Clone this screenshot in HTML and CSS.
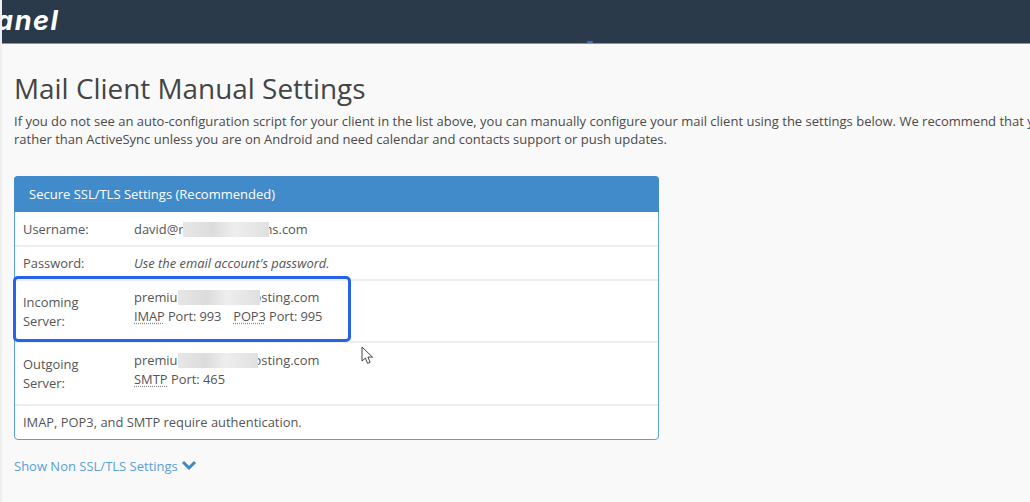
FILE: index.html
```html
<!DOCTYPE html>
<html lang="en">
<head>
<meta charset="utf-8">
<title>Mail Client Manual Settings</title>
<link rel="stylesheet" href="styles.css">
</head>
<body>
<header class="topbar">
  <span class="logo">anel</span>
  <span class="topbar-dot"></span>
</header>
<main class="content">
  <h1 class="title">Mail Client Manual Settings</h1>
  <p class="intro">If you do not see an auto-configuration script for your client in the list above, you can manually configure your mail client using the settings below. We recommend that you use IMAP<br>rather than ActiveSync unless you are on Android and need calendar and contacts support or push updates.</p>
  <section class="panel">
    <div class="panel-head">Secure <abbr class="term">SSL/TLS</abbr> Settings (Recommended)</div>
    <div class="row row-single">
      <div class="label">Username:</div>
      <div class="value">david@r<span class="blur blur-user"></span>ns.com</div>
    </div>
    <div class="row row-single">
      <div class="label">Password:</div>
      <div class="value"><em>Use the email account's password.</em></div>
    </div>
    <div class="row row-double">
      <div class="label label-low">Incoming<br>Server:</div>
      <div class="value value-high">premiu<span class="blur blur-in"></span>osting.com<br><span class="port-line"><abbr class="term">IMAP</abbr> Port: 993<span class="port-gap"></span><abbr class="term">POP3</abbr> Port: 995</span></div>
    </div>
    <div class="row row-double row-outgoing">
      <div class="label label-low">Outgoing<br>Server:</div>
      <div class="value value-high">premiu<span class="blur blur-out"></span>osting.com<br><abbr class="term">SMTP</abbr> Port: 465</div>
    </div>
    <div class="row row-last">IMAP, POP3, and SMTP require authentication.</div>
    <div class="highlight"></div>
    <svg class="cursor" width="13" height="19" viewBox="0 0 13 19"><path d="M1 1v14l3.4-3 2.2 5.4 2.6-1.1-2.3-5.2h4.6z" fill="#fff" stroke="#444" stroke-width="1"/></svg>
  </section>
  <a class="toggle" href="#">Show Non SSL/TLS Settings <svg class="chevron" width="16" height="11" viewBox="0 0 16 11"><path d="M2 2l6 6 6-6" fill="none" stroke="#3f86c4" stroke-width="3"/></svg></a>
</main>
</body>
</html>
```
FILE: styles.css
```css
* { box-sizing: border-box; }
html, body { margin: 0; height: 100%; overflow: hidden; }
body {
  background: #f9f9f9;
  color: #555;
  font-family: "Open Sans", sans-serif;
  font-size: 13px;
  border-left: 2px solid #efefef;
  width: 1030px;
  position: relative;
}
.topbar {
  height: 44px;
  margin-left: -2px;
  background: #2a3a4b;
  border-bottom: 1px solid #8d96a0;
  position: relative;
  overflow: hidden;
}
.logo {
  display: block;
  margin-left: -4px;
  color: #fff;
  font-family: Inter, "Open Sans", sans-serif;
  font-size: 27px;
  font-weight: 700;
  font-style: italic;
  line-height: 41px;
  letter-spacing: 1.6px;
}
.topbar-dot {
  position: absolute;
  left: 587px;
  bottom: -1px;
  width: 6px;
  height: 3px;
  background: #3f6fc4;
  border-radius: 0 0 3px 3px;
}
.content { padding: 28px 0 0 12px; }
.title {
  margin: 0;
  font-size: 27.9px;
  font-weight: 400;
  line-height: 32px;
  color: #444;
}
.intro {
  margin: 8px 0 0;
  width: 1100px;
  line-height: 18px;
  color: #4a4a4a;
}
.panel {
  position: relative;
  margin-top: 28px;
  width: 645px;
  height: 264px;
  background: #fff;
  border: 1px solid #5b9fd8;
  border-radius: 4px;
  font-size: 12.9px;
}
.panel-head {
  height: 36px;
  margin: -1px -1px 1px;
  padding-left: 15px;
  background: #428bca;
  color: #fff;
  font-size: 13px;
  line-height: 36px;
  border-radius: 4px 4px 0 0;
}
.term {
  text-decoration: underline dotted #888;
  text-underline-offset: 2px;
}
.row {
  display: flex;
  align-items: center;
  padding: 0 8px;
  border-bottom: 2px solid #eee;
  line-height: 19px;
}
.row-single { height: 34px; }
.row-double { height: 62px; }
.row-outgoing { height: 63px; }
.row-last { height: 33px; border-bottom: 0; }
.label { width: 111px; flex: none; }
.label-low { margin-top: 1px; }
.value-high { margin-bottom: 9px; }
.row-outgoing .value-high { margin-bottom: 7px; }
.port-line { letter-spacing: -0.1px; }
.blur {
  display: inline-block;
  position: relative;
  height: 15px;
  vertical-align: -3px;
  background: linear-gradient(90deg, #e6e6e6, #dcdcdc 35%, #eeeeee 60%, #e0e0e0);
}
.blur-user { width: 86px; margin-right: -5px; }
.blur-in { width: 82px; margin-right: -6px; }
.blur-out { width: 80px; margin-right: -4px; }
.port-gap { display: inline-block; width: 12px; }
.highlight {
  position: absolute;
  left: -2px;
  top: 99px;
  width: 338px;
  height: 66px;
  border: 3px solid #2563eb;
  border-radius: 5px;
  pointer-events: none;
}
.cursor { position: absolute; left: 346px; top: 169px; }
.toggle {
  display: inline-block;
  margin-top: 16px;
  color: #5b9fd8;
  text-decoration: none;
  line-height: 20px;
}
.chevron { vertical-align: 0; }
```
